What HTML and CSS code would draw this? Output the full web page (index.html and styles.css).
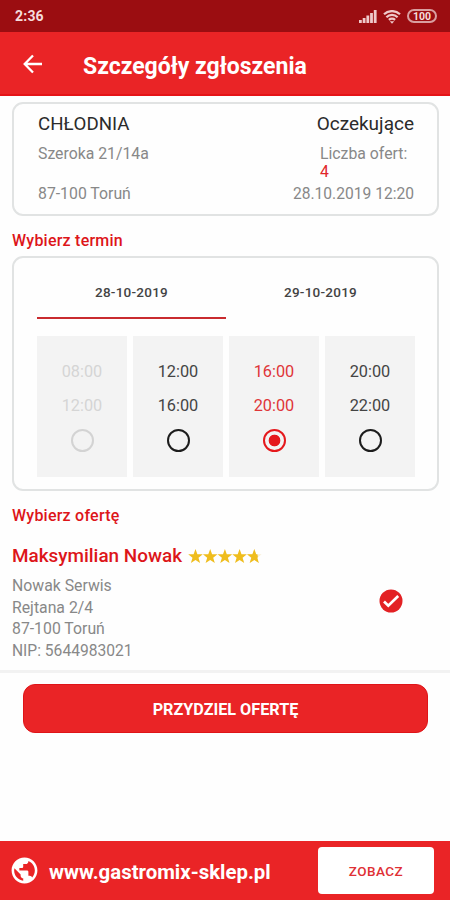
FILE: index.html
```html
<!DOCTYPE html>
<html lang="pl">
<head>
<meta charset="utf-8">
<title>Szczegóły zgłoszenia</title>
<link rel="stylesheet" href="styles.css">
</head>
<body>
<div class="status">
  <span class="clock">2:36</span>
  <div class="indicators">
    <svg class="signal" width="18" height="14" viewBox="0 0 18 14"><path d="M0 11h2.800v3H0zM3.700 9h2.800v5H3.700zM7.400 6.500h2.800v7.500H7.400zM11.100 4h2.800v10h-2.800zM14.800 1h2.800v13h-2.800z"/></svg>
    <svg class="wifi" width="18" height="14" viewBox="0 0 18 14"><path d="M1 4.300a11.500 11.500 0 0 1 16 0M3.400 7.200a8 8 0 0 1 11.200 0M5.900 9.900a4.600 4.600 0 0 1 6.200 0"/><path class="dot" d="M6.800 11.300h4.400L9 13.800z"/></svg>
    <span class="battery">100</span>
  </div>
</div>
<header class="bar">
  <svg class="back" width="20" height="20" viewBox="0 0 20 20"><path d="M19 10H2M10 1.500L1.700 10l8.300 8.500"/></svg>
  <h1>Szczegóły zgłoszenia</h1>
</header>
<main>
  <section class="card request">
    <div class="col">
      <span class="name">CHŁODNIA</span>
      <span class="street">Szeroka 21/14a</span>
      <span class="city">87-100 Toruń</span>
    </div>
    <div class="col right">
      <span class="name state">Oczekujące</span>
      <span class="count">Liczba ofert:<b>4</b></span>
      <span class="date">28.10.2019 12:20</span>
    </div>
  </section>
  <h2 class="term">Wybierz termin</h2>
  <section class="card schedule">
    <div class="tabs">
      <div class="tab active">28-10-2019</div>
      <div class="tab">29-10-2019</div>
    </div>
    <div class="slots">
      <div class="slot disabled"><span>08:00</span><span>12:00</span><i class="radio"></i></div>
      <div class="slot"><span>12:00</span><span>16:00</span><i class="radio"></i></div>
      <div class="slot selected"><span>16:00</span><span>20:00</span><i class="radio"></i></div>
      <div class="slot"><span>20:00</span><span>22:00</span><i class="radio"></i></div>
    </div>
  </section>
  <h2 class="choose">Wybierz ofertę</h2>
  <section class="offer">
    <div>
      <div class="person">
        <h3>Maksymilian Nowak</h3>
        <svg class="stars" width="74" height="15" viewBox="0 0 74 15">
          <defs><path id="star" d="M7.500 0l1.900 5.200 5.400.1-4.300 3.400 1.600 5.300-4.600-3.100L2.900 14l1.600-5.300L.2 5.300l5.400-.1z"/>
          <clipPath id="part"><path d="M0 0h9.500l3 15H0z"/></clipPath></defs>
          <use href="#star"/><use href="#star" x="14.700"/><use href="#star" x="29.400"/><use href="#star" x="44.100"/>
          <g transform="translate(58.800 0)"><use href="#star" class="rest"/><use href="#star" clip-path="url(#part)"/></g>
        </svg>
      </div>
      <p><span>Nowak Serwis</span><br><span>Rejtana 2/4</span><br><span>87-100 Toruń</span><br><span class="nip">NIP: 5644983021</span></p>
    </div>
    <svg class="check" width="24" height="24" viewBox="0 0 24 24"><circle cx="12" cy="12" r="11.500"/><path d="M5 12.500l4.300 4.200L19.200 7"/></svg>
  </section>
  <div class="action"><div class="assign">PRZYDZIEL OFERTĘ</div></div>
</main>
<footer>
  <svg class="globe" width="31" height="31" viewBox="0 0 24 24"><path d="M12 2C6.480 2 2 6.480 2 12s4.480 10 10 10 10-4.480 10-10S17.520 2 12 2zm-1 17.930c-3.950-.490-7-3.850-7-7.930 0-.620.080-1.210.210-1.790L9 15v1c0 1.100.9 2 2 2v1.930zm6.900-2.540c-.260-.810-1-1.390-1.900-1.390h-1v-3c0-.550-.450-1-1-1H8v-2h2c.550 0 1-.450 1-1V7h2c1.100 0 2-.9 2-2v-.410c2.930 1.190 5 4.060 5 7.410 0 2.080-.8 3.970-2.100 5.390z"/></svg>
  <span class="site">www.gastromix-sklep.pl</span>
  <div class="visit">ZOBACZ</div>
</footer>
</body>
</html>
```
FILE: styles.css
```css
* { box-sizing: border-box; }
body {
  margin: 0;
  height: 900px;
  display: flex;
  flex-direction: column;
  overflow: hidden;
  background: #fefefe;
  font-family: Roboto, sans-serif;
  font-size: 15.800px;
  color: #888;
}
h1, h2, h3, p { margin: 0; }
svg { display: block; flex: none; }
span, h1, h2, h3 { white-space: nowrap; }

.status {
  height: 32px;
  flex: none;
  display: flex;
  align-items: center;
  justify-content: space-between;
  padding: 0 13px 0 15px;
  background: #9b0d11;
  color: #f5dcdc;
}
.clock { font-size: 14px; font-weight: 700; line-height: 31px; letter-spacing: 0.200px; padding-top: 1px; }
.indicators { display: flex; align-items: center; }
.signal { fill: #efc9ca; margin-right: 6px; }
.wifi { fill: none; stroke: #efc9ca; stroke-width: 2.200; margin: 2px 6px 0 0; }
.wifi .dot { fill: #efc9ca; stroke: none; }
.battery {
  width: 30px;
  height: 14px;
  border: 2px solid #d99fa0;
  border-radius: 7px;
  font-size: 10.500px;
  font-weight: 700;
  line-height: 11px;
  text-align: center;
}

.bar {
  height: 64px;
  flex: none;
  display: flex;
  align-items: center;
  padding: 1px 0 0 23px;
  background: #ea2426;
  border-bottom: 2px solid #e51317;
  color: #fff;
}
.back { fill: none; stroke: #fff; stroke-width: 2.300; margin-right: 40px; }
h1 { font-size: 23px; line-height: 30px; font-weight: 700; padding-top: 6px; }

main { flex: 1; display: flex; flex-direction: column; }
.card {
  margin: 0 11px 0 12px;
  border: 2px solid #e1e3e3;
  border-radius: 11px;
  flex: none;
}
.request {
  height: 114px;
  margin-top: 6px;
  padding: 8px 23px 0 24px;
  display: flex;
  justify-content: space-between;
}
.col { display: flex; flex-direction: column; align-items: flex-start; line-height: 20px; }
.right { align-items: flex-end; }
.name { font-size: 18.700px; line-height: 24px; height: 23px; color: #2b2b2b; }
.state { font-size: 19px; }
.street, .count { height: 38px; margin-top: 9px; }
.count { width: 94px; line-height: 18px; padding-top: 1px; }
.count b { display: block; font-weight: 400; color: #e1262a; }
.city, .date { margin-top: 2px; }
.date { font-size: 15.600px; }

h2 { margin-left: 12px; font-size: 16px; line-height: 20px; font-weight: 500; letter-spacing: 0.230px; color: #dd1519; }
.term { margin-top: 15px; }
.schedule { height: 235px; margin-top: 5px; padding: 10px 22px 0 23px; }
.tabs { display: flex; height: 51px; }
.tab { flex: 1; text-align: center; font-size: 13.500px; font-weight: 500; letter-spacing: 0.250px; line-height: 48px; color: #444; }
.active { border-bottom: 2px solid #c92b2f; }
.slots { display: grid; grid-template-columns: repeat(4, 1fr); gap: 6px; margin-top: 17px; }
.slot {
  height: 141px;
  display: flex;
  flex-direction: column;
  align-items: center;
  padding-top: 19px;
  background: #f3f3f3;
  font-size: 16.300px;
  line-height: 34px;
  color: #444;
}
.radio { width: 23px; height: 23px; border: 2px solid #1c1c1c; border-radius: 50%; margin-top: 6px; }
.disabled { color: #d5d5d5; }
.disabled .radio { border-color: #d3d3d3; }
.selected { color: #df3539; }
.selected .radio { border-color: #e5181c; background: radial-gradient(circle, #e5181c 5.500px, transparent 6.200px); }

.choose { margin-top: 15px; }
.offer {
  height: 147px;
  flex: none;
  display: flex;
  justify-content: space-between;
  padding: 17px 47px 0 12px;
  border-bottom: 3px solid #f2f2f2;
}
.person { display: flex; align-items: center; }
h3 { width: 169px; font-size: 18.900px; line-height: 26px; font-weight: 500; color: #dd1519; }
.stars { fill: #efbd1d; margin-left: 7px; }
.rest { fill: #f8efd5; }
.offer p { line-height: 21.700px; margin-top: 6px; }
.nip { font-size: 15.600px; }
.check { fill: #e32124; margin-top: 46px; }
.check path { fill: none; stroke: #fff; stroke-width: 2.700; }

.action { padding: 11px 22px 0 23px; }
.assign {
  height: 49px;
  border: 1px solid #df1418;
  border-radius: 12px;
  background: #ea2426;
  color: #fff;
  font-size: 16.200px;
  font-weight: 700;
  line-height: 49px;
  text-align: center;
}

footer {
  height: 59px;
  flex: none;
  display: flex;
  align-items: center;
  padding: 0 16px 0 9px;
  background: #ea2426;
  color: #fff;
}
.globe { fill: #fff; }
.site { font-size: 20.400px; font-weight: 700; margin-left: 9px; padding-top: 2px; }
.visit {
  width: 116px;
  height: 47px;
  margin-left: auto;
  border-radius: 4px;
  background: #fff;
  color: #df3035;
  font-size: 13.500px;
  font-weight: 500;
  letter-spacing: 0.450px;
  line-height: 49px;
  text-align: center;
}
```
